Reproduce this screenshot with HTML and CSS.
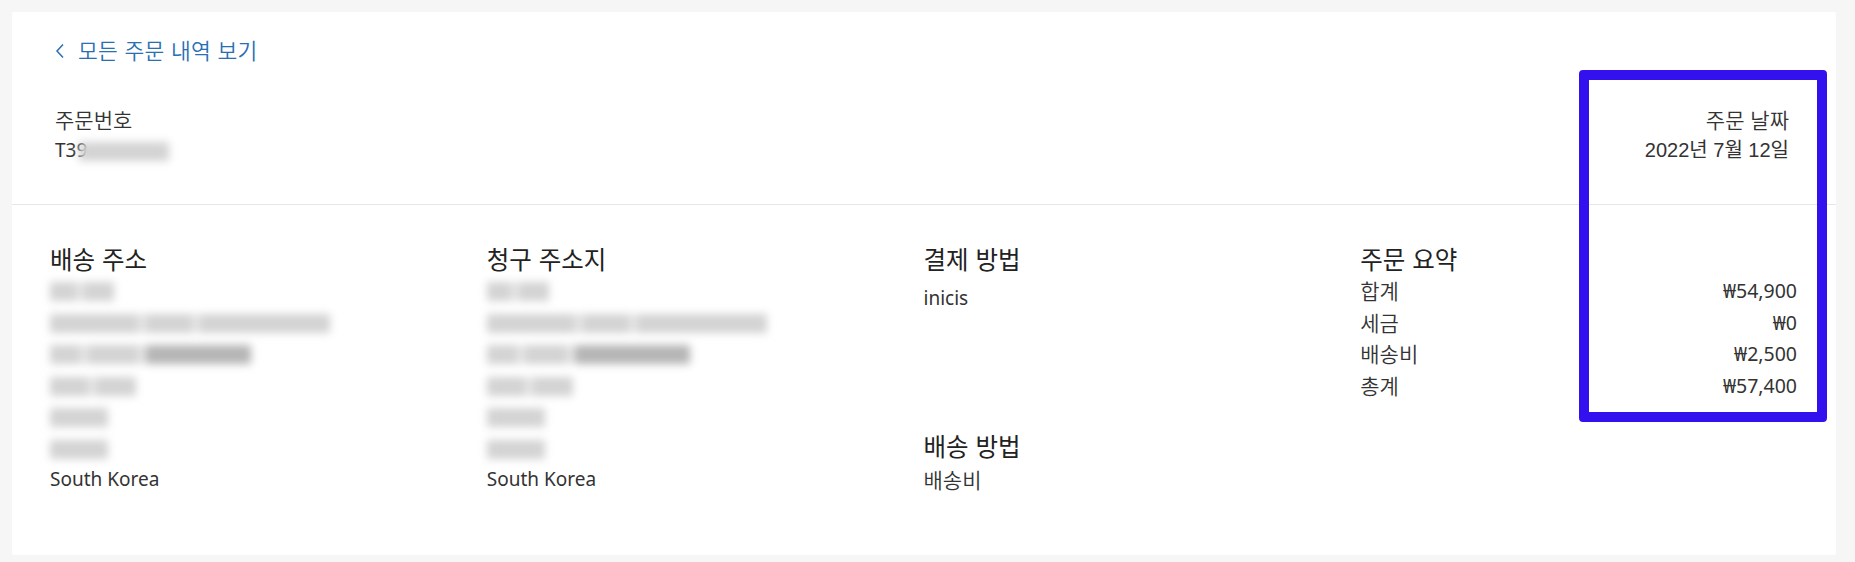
FILE: index.html
```html
<!DOCTYPE html>
<html lang="ko">
<head>
<meta charset="utf-8">
<title>주문 상세</title>
<link rel="stylesheet" href="styles.css">
</head>
<body>
<div class="page">
  <div class="card">
    <div class="back">
      <a class="back-link" href="#">
        <svg class="chev" width="10" height="16" viewBox="0 0 10 16"><path d="M8 1.5 L2 8 L8 14.5" fill="none" stroke="#2a6fb2" stroke-width="1.5"/></svg>
        <span>모든 주문 내역 보기</span>
      </a>
    </div>
    <div class="order-head">
      <div class="head-left">
        <div class="line ko">주문번호</div>
        <div class="line">T39<span class="blur num"><i class="s w90"></i></span></div>
      </div>
      <div class="head-right">
        <div class="line ko">주문 날짜</div>
        <div class="line date">2022년 7월 12일</div>
      </div>
    </div>
    <div class="details">
      <div class="col">
        <h3 class="heading">배송 주소</h3>
        <div class="line"><span class="blur"><i class="s w26"></i><i class="g"></i><i class="s w30"></i></span></div>
        <div class="line"><span class="blur"><i class="s w88"></i><i class="g"></i><i class="s w46"></i><i class="g"></i><i class="s w130"></i></span></div>
        <div class="line"><span class="blur"><i class="s w30"></i><i class="g"></i><i class="s w50"></i><i class="g"></i><i class="d w105"></i></span></div>
        <div class="line"><span class="blur"><i class="s w38"></i><i class="g"></i><i class="s w40"></i></span></div>
        <div class="line"><span class="blur"><i class="s w58"></i></span></div>
        <div class="line"><span class="blur"><i class="s w58"></i></span></div>
        <div class="line">South Korea</div>
      </div>
      <div class="col">
        <h3 class="heading">청구 주소지</h3>
        <div class="line"><span class="blur"><i class="s w24"></i><i class="g"></i><i class="s w30"></i></span></div>
        <div class="line"><span class="blur"><i class="s w88"></i><i class="g"></i><i class="s w46"></i><i class="g"></i><i class="s w130"></i></span></div>
        <div class="line"><span class="blur"><i class="s w30"></i><i class="g"></i><i class="s w42"></i><i class="g"></i><i class="d w115"></i></span></div>
        <div class="line"><span class="blur"><i class="s w38"></i><i class="g"></i><i class="s w40"></i></span></div>
        <div class="line"><span class="blur"><i class="s w58"></i></span></div>
        <div class="line"><span class="blur"><i class="s w58"></i></span></div>
        <div class="line">South Korea</div>
      </div>
      <div class="col">
        <h3 class="heading">결제 방법</h3>
        <div class="line pay">inicis</div>
        <h3 class="heading ship">배송 방법</h3>
        <div class="line ko shipline">배송비</div>
      </div>
      <div class="col">
        <h3 class="heading">주문 요약</h3>
        <div class="line row"><span class="ko">합계</span><span class="amt">₩54,900</span></div>
        <div class="line row"><span class="ko">세금</span><span class="amt">₩0</span></div>
        <div class="line row"><span class="ko">배송비</span><span class="amt">₩2,500</span></div>
        <div class="line row"><span class="ko">총계</span><span class="amt">₩57,400</span></div>
      </div>
    </div>
  </div>
  <div class="highlight"></div>
</div>
</body>
</html>
```

FILE: styles.css
```css
html, body {
  margin: 0;
  height: 100%;
  overflow: hidden;
}
body {
  background: #f6f6f6;
  font-family: "Noto Sans", "Noto Sans CJK KR", sans-serif;
  color: #333;
}
.page {
  position: relative;
  box-sizing: border-box;
  height: 562px;
  padding: 12px 19px 7px 12px;
}
.card {
  background: #fff;
  height: 100%;
  border-radius: 2px;
}
.back {
  padding: 23px 43px 0;
  height: 30px;
  line-height: 30px;
}
.back-link {
  display: inline-flex;
  align-items: center;
  color: #2a6fb2;
  text-decoration: none;
  font-family: "Noto Sans CJK KR", sans-serif;
  font-size: 21.5px;
  font-weight: 350;
  letter-spacing: 0.3px;
}
.chev {
  margin-right: 13px;
  margin-top: 1px;
}
.order-head {
  display: flex;
  justify-content: space-between;
  padding: 38.5px 47px 38.5px 43px;
  border-bottom: 1px solid #e6e6e6;
}
.line {
  font-size: 19px;
  line-height: 31.5px;
  height: 31.5px;
  white-space: nowrap;
}
.ko {
  font-family: "Noto Sans CJK KR", sans-serif;
  font-size: 21px;
  font-weight: 350;
}
.order-head .line {
  line-height: 31px;
  height: 31px;
}
.head-right {
  text-align: right;
}
.date {
  font-family: "Liberation Sans", "Noto Sans CJK KR", sans-serif;
  font-size: 20px;
}
.details {
  display: grid;
  grid-template-columns: repeat(4, 1fr);
  padding: 38px 39px 0 38px;
}
.heading {
  margin: 0;
  font-weight: 400;
  font-size: 24.5px;
  line-height: 32px;
  height: 32px;
  color: #222;
  font-family: "Noto Sans CJK KR", sans-serif;
}
.pay {
  margin-top: 8px;
}
.ship {
  margin-top: 115px;
}
.shipline {
  margin-top: 2px;
}
.row {
  display: flex;
  justify-content: space-between;
}
.amt {
  font-size: 19.5px;
}
.blur {
  display: inline-flex;
  align-items: center;
  vertical-align: middle;
  filter: blur(4.5px);
  height: 24px;
}
.blur.num {
  margin-left: -8px;
}
.blur i {
  display: inline-block;
  height: 19px;
}
.blur .s { background: #d3d3d3; }
.blur .d { background: #b5b5b5; }
.blur .g { width: 8px; height: 19px; background: #e6e6e6; }
.w24 { width: 24px; }
.w26 { width: 26px; }
.w30 { width: 30px; }
.w38 { width: 38px; }
.w40 { width: 40px; }
.w42 { width: 42px; }
.w46 { width: 46px; }
.w50 { width: 50px; }
.w58 { width: 58px; }
.w88 { width: 88px; }
.w90 { width: 90px; background: #dedede; }
.w105 { width: 105px; }
.w115 { width: 115px; }
.w130 { width: 130px; }
.highlight {
  position: absolute;
  left: 1579px;
  top: 70px;
  width: 248px;
  height: 352px;
  box-sizing: border-box;
  border: 10px solid #3311ee;
  border-radius: 4px;
}
```
